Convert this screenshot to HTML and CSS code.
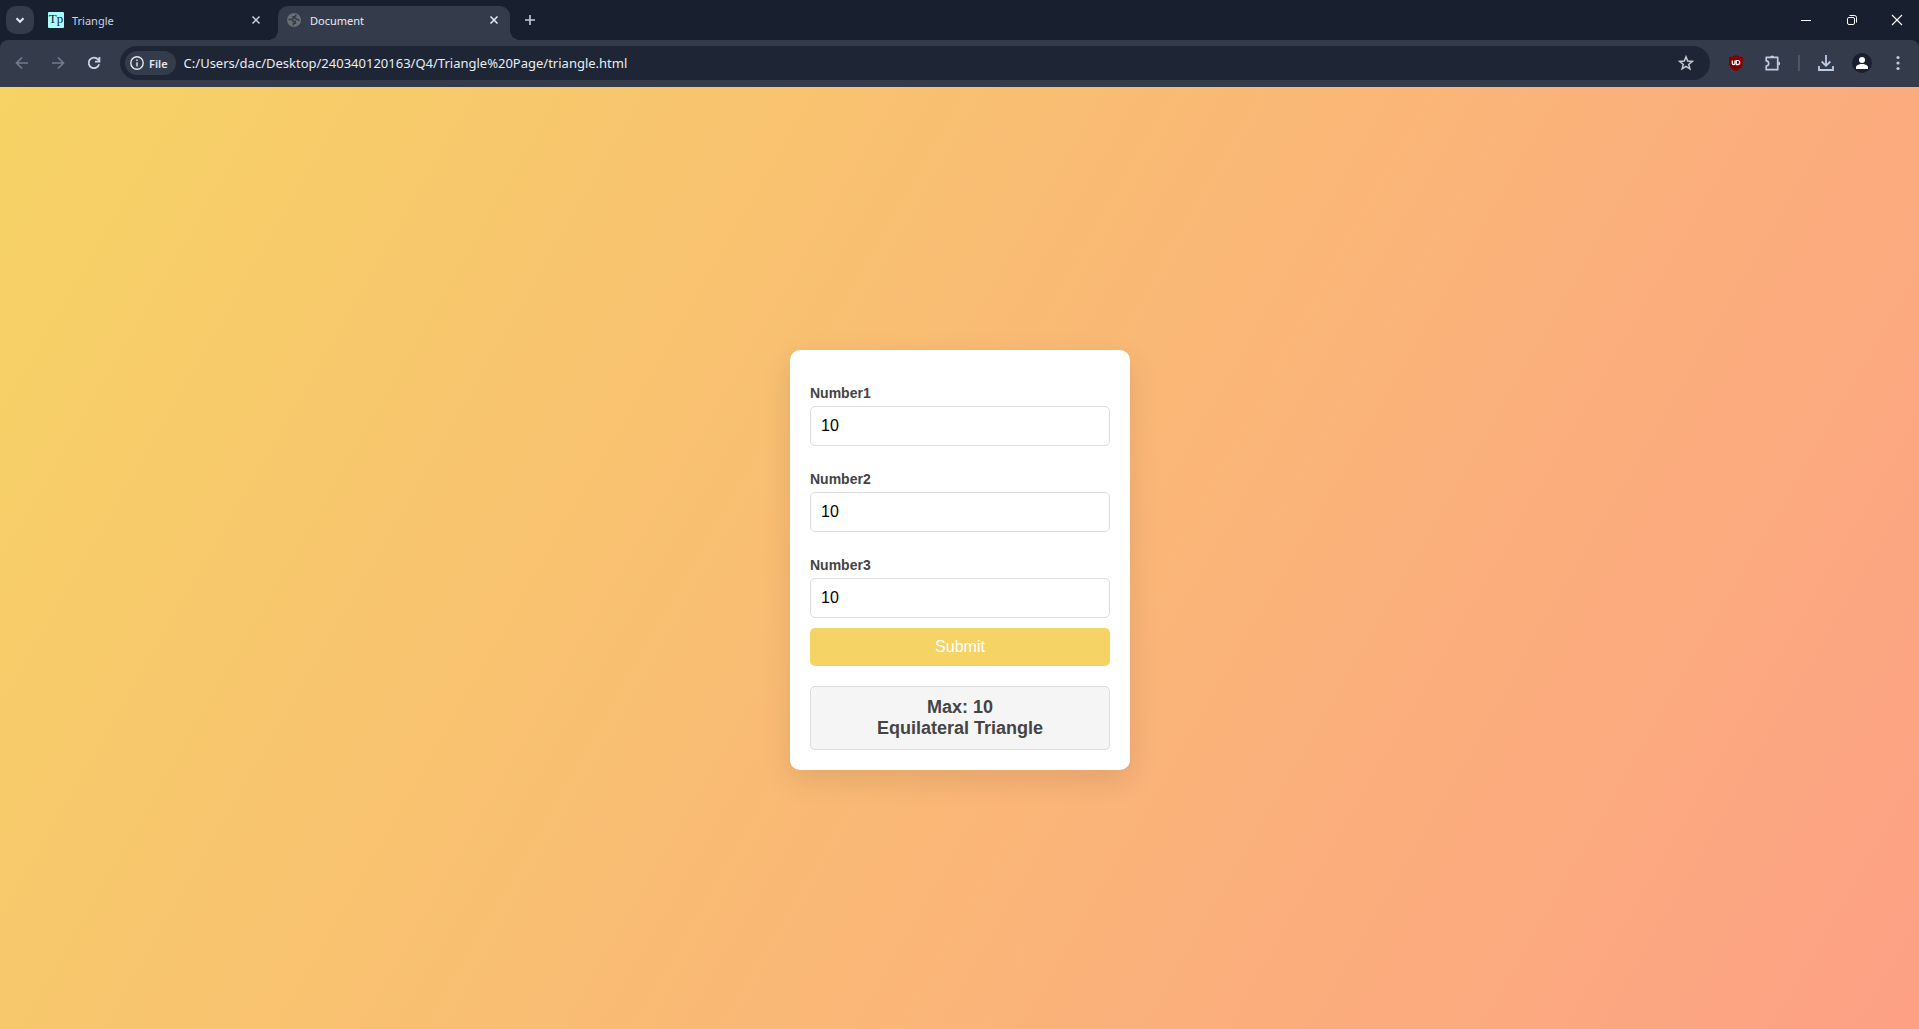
FILE: index.html
```html
<!DOCTYPE html>
<html lang="en">
<head>
<meta charset="utf-8">
<title>Document</title>
<link rel="stylesheet" href="styles.css">
</head>
<body>
<header class="browser">
  <div class="tab-strip">
    <button class="tab-search" type="button" aria-label="Search tabs">
      <svg width="12" height="12" viewBox="0 0 12 12" fill="none" stroke="#e3e8f0" stroke-width="2"><path d="M2.500 4.300 6 7.800l3.500-3.500"/></svg>
    </button>
    <div class="tab">
      <span class="favicon">Tp</span>
      <span class="tab-title">Triangle</span>
      <button class="tab-close" type="button" aria-label="Close tab">
        <svg width="10" height="10" viewBox="0 0 10 10" fill="none" stroke="#c7d3e6" stroke-width="1.500"><path d="M1.500 1.500 8.500 8.500M8.500 1.500 1.500 8.500"/></svg>
      </button>
    </div>
    <div class="tab tab-active">
      <svg class="globe" width="14" height="14" viewBox="0 0 14 14"><circle cx="7" cy="7" r="7" fill="#696e75"/><path d="M1.500 6.500h3.200c1 0 1.300.8 1.300 1.700h1.600c.5 0 .8.300.8.800v1.200H6.500v2.300M8.800 1.400v1.100c0 .9-.6 1.300-1.500 1.300H6v1.500h2.300c.8 0 1 .5 1 1.200h1.200c.7 0 1.100.5 1.700 1.200" fill="none" stroke="#343c4c" stroke-width="1.500"/></svg>
      <span class="tab-title">Document</span>
      <button class="tab-close" type="button" aria-label="Close tab">
        <svg width="10" height="10" viewBox="0 0 10 10" fill="none" stroke="#e8ecf3" stroke-width="1.500"><path d="M1.500 1.500 8.500 8.500M8.500 1.500 1.500 8.500"/></svg>
      </button>
    </div>
    <button class="new-tab" type="button" aria-label="New tab">
      <svg width="12" height="12" viewBox="0 0 12 12" fill="none" stroke="#c0cbdd" stroke-width="1.600"><path d="M6 1v10M1 6h10"/></svg>
    </button>
    <div class="window-controls">
      <button type="button" aria-label="Minimize"><svg width="12" height="12" viewBox="0 0 12 12" stroke="#fff"><path d="M1 6.500h10"/></svg></button>
      <button type="button" aria-label="Restore"><svg width="12" height="12" viewBox="0 0 12 12" fill="none" stroke="#fff"><rect x="1.500" y="3.500" width="7" height="7" rx="1.500"/><path d="M3.500 1.500h5a2 2 0 0 1 2 2v5"/></svg></button>
      <button type="button" aria-label="Close"><svg width="12" height="12" viewBox="0 0 12 12" fill="none" stroke="#fff" stroke-width="1.100"><path d="m1 1 10 10M11 1 1 11"/></svg></button>
    </div>
  </div>
  <div class="toolbar">
    <button class="tool" type="button" aria-label="Back"><svg width="14" height="14" viewBox="0 0 14 14" fill="none" stroke="#707b8e" stroke-width="1.700"><path d="M13 7H2M7 1.500 1.500 7 7 12.500"/></svg></button>
    <button class="tool" type="button" aria-label="Forward"><svg width="14" height="14" viewBox="0 0 14 14" fill="none" stroke="#707b8e" stroke-width="1.700"><path d="M1 7h11M7 1.500 12.500 7 7 12.500"/></svg></button>
    <button class="tool" type="button" aria-label="Reload"><svg width="14" height="14" viewBox="0 0 14 14" fill="none" stroke="#c7d3e6" stroke-width="1.800"><path d="M12.100 8.200A5.300 5.300 0 1 1 11 3.400l1.600 1.600M12.400 1v4.700H8"/></svg></button>
    <div class="omnibox">
      <button class="file-chip" type="button">
        <svg width="14" height="14" viewBox="0 0 14 14" fill="none" stroke="#e3e8f0" stroke-width="1.400"><circle cx="7" cy="7" r="6.200"/><path d="M7 6.200v4.200M7 3.600V5"/></svg>
        File
      </button>
      <input class="address" type="text" aria-label="Address" value="C:/Users/dac/Desktop/240340120163/Q4/Triangle%20Page/triangle.html">
      <button class="tool" type="button" aria-label="Bookmark"><svg width="16" height="16" viewBox="0 0 16 16" fill="none" stroke="#c4c9d2" stroke-width="1.500"><path d="m8 1.800 1.700 4.300 4.600.3-3.600 3 1.200 4.500L8 11.400l-3.900 2.500 1.200-4.500-3.600-3 4.600-.3z"/></svg></button>
    </div>
    <button class="tool" type="button" aria-label="uBlock">
      <svg width="16" height="16" viewBox="0 0 16 16"><path d="M8 0c2 1.400 4 1.800 7 1.900v6.300c0 3.700-3.300 6.100-7 7.800-3.700-1.700-7-4.100-7-7.800V1.900C4 1.800 6 1.400 8 0z" fill="#800000"/><path d="M4.300 5.500v2.800a1.300 1.300 0 0 0 2.600 0V5.500M8.300 5.500h1.400a2 2 0 0 1 0 4.100H8.300z" fill="none" stroke="#fff" stroke-width="1.200"/></svg>
    </button>
    <button class="tool" type="button" aria-label="Extensions">
      <svg width="18" height="18" viewBox="0 0 18 18" fill="none" stroke="#bccbe2" stroke-width="1.700"><path d="M3.200 3.300h11.500v12.400H3.200v-3.600c1.600-.2 2.500-1.200 2.500-2.600S4.800 7.100 3.200 6.900z" stroke-linejoin="round"/><path d="M7.300 3.300a1.900 1.900 0 0 1 3.800 0zM15.200 7.500a2 2 0 0 1 0 4z" fill="#bccbe2" stroke="none"/></svg>
    </button>
    <span class="divider"></span>
    <button class="tool" type="button" aria-label="Downloads"><svg width="16" height="16" viewBox="0 0 16 16" fill="none" stroke="#bccbe2" stroke-width="1.800"><path d="M8 0v10.500M3.700 6.500 8 10.800l4.300-4.300M1 11v4h14v-4"/></svg></button>
    <button class="tool" type="button" aria-label="Profile"><svg width="20" height="20" viewBox="0 0 20 20"><circle cx="10" cy="10" r="10" fill="#182030"/><circle cx="10" cy="7" r="3" fill="#fff"/><path d="M4 16v-1.700c0-2 3-3.300 6-3.300s6 1.300 6 3.300V16z" fill="#fff"/></svg></button>
    <button class="tool" type="button" aria-label="Menu"><svg width="4" height="16" viewBox="0 0 4 16" fill="#c0cbdd"><circle cx="2" cy="2.500" r="1.600"/><circle cx="2" cy="8" r="1.600"/><circle cx="2" cy="13.500" r="1.600"/></svg></button>
  </div>
</header>
<main class="page">
  <form class="card">
    <label for="n1">Number1</label>
    <input class="field" id="n1" type="text" value="10">
    <label for="n2">Number2</label>
    <input class="field" id="n2" type="text" value="10">
    <label for="n3">Number3</label>
    <input class="field" id="n3" type="text" value="10">
    <button class="submit" type="button">Submit</button>
    <output class="result" for="n1 n2 n3">Max: 10<br>Equilateral Triangle</output>
  </form>
</main>
</body>
</html>
```

FILE: styles.css
```css
* {
  box-sizing: border-box;
}

body {
  margin: 0;
  min-height: 100vh;
  display: flex;
  flex-direction: column;
  font-family: "Liberation Sans", Arial, sans-serif;
}

button {
  border: 0;
  padding: 0;
  background: none;
  font: inherit;
  color: inherit;
}

svg {
  display: block;
  flex: none;
}

/* Browser frame */
.browser {
  background: #182030;
  color: #e3e8f0;
  font-family: "Noto Sans", "Segoe UI", sans-serif;
  font-size: 11px;
}

.tab-strip {
  display: flex;
  align-items: center;
  height: 40px;
  padding-left: 6px;
}

.tab-search,
.new-tab {
  display: grid;
  place-items: center;
  width: 28px;
  height: 28px;
  border-radius: 10px;
}

.tab-search {
  background: #343c4c;
}

.new-tab {
  margin-left: 6px;
}

.tab {
  position: relative;
  display: flex;
  align-items: center;
  gap: 8px;
  width: 232px;
  height: 34px;
  margin: 6px 0 0 6px;
  padding: 0 8px 6px;
  color: #c7d3e6;
}

.tab-active {
  padding-left: 9px;
  gap: 9px;
  background: #343c4c;
  border-radius: 10px 10px 0 0;
  color: #e8ecf3;
}

.tab-active::before,
.tab-active::after {
  content: "";
  position: absolute;
  bottom: 0;
  width: 10px;
  height: 10px;
}

.tab-active::before {
  right: 100%;
  background: radial-gradient(circle at 0 0, transparent 10px, #343c4c 10px);
}

.tab-active::after {
  left: 100%;
  background: radial-gradient(circle at 100% 0, transparent 10px, #343c4c 10px);
}

.tab-title {
  flex: 1;
}

.tab-close {
  display: grid;
  place-items: center;
  width: 16px;
  height: 16px;
}

.favicon {
  width: 16px;
  height: 16px;
  border-radius: 1px;
  background: #a5ffff;
  color: #182030;
  font: 13px/14px "Liberation Serif", serif;
  text-align: center;
}

.window-controls {
  display: flex;
  margin-left: auto;
}

.window-controls button {
  display: grid;
  place-items: center;
  width: 46px;
  height: 40px;
}

.window-controls button:last-child {
  width: 44px;
}

.toolbar {
  display: flex;
  align-items: center;
  height: 47px;
  padding: 0 3px 1px 4px;
  background: #343c4c;
  border-radius: 8px 8px 0 0;
}

.tool {
  display: grid;
  place-items: center;
  width: 36px;
  height: 34px;
}

.omnibox {
  flex: 1;
  display: flex;
  align-items: center;
  height: 34px;
  margin: 0 8px;
  padding: 0 6px 0 5px;
  background: #1e2636;
  border-radius: 17px;
}

.file-chip {
  display: flex;
  align-items: center;
  gap: 5px;
  height: 24px;
  padding: 0 8px 0 5px;
  border-radius: 12px;
  background: #343c4c;
  font-weight: 600;
}

.address {
  flex: 1;
  border: 0;
  padding: 0 8px;
  background: none;
  color: #e8ecf3;
  font-family: inherit;
  font-size: 13px;
}

.divider {
  width: 2px;
  height: 16px;
  margin: 0 8px;
  background: #4c5668;
}

/* Triangle page */
.page {
  flex: 1;
  display: flex;
  align-items: center;
  justify-content: center;
  padding: 4px 0 0 1px;
  background: linear-gradient(120deg, #f6d365 0%, #fda085 100%);
}

.card {
  display: flex;
  flex-direction: column;
  width: 340px;
  padding: 20px;
  border-radius: 10px;
  background: #fff;
  box-shadow: 0 10px 30px rgba(0, 0, 0, 0.1);
  color: #444;
}

.card label {
  margin: 15px 0 5px;
  font-size: 14px;
  font-weight: bold;
  line-height: 16px;
}

.field {
  height: 40px;
  margin-bottom: 10px;
  padding: 10px;
  border: 1px solid #ddd;
  border-radius: 5px;
  color: #000;
  font-family: inherit;
  font-size: 16px;
}

.submit {
  height: 38px;
  border-radius: 5px;
  background: #f6d365;
  color: #fff;
  font-size: 16px;
}

.result {
  display: block;
  margin-top: 20px;
  padding: 10px;
  border: 1px solid #ddd;
  border-radius: 5px;
  background: #f5f5f5;
  font-size: 18px;
  font-weight: bold;
  line-height: 21px;
  text-align: center;
}
```
